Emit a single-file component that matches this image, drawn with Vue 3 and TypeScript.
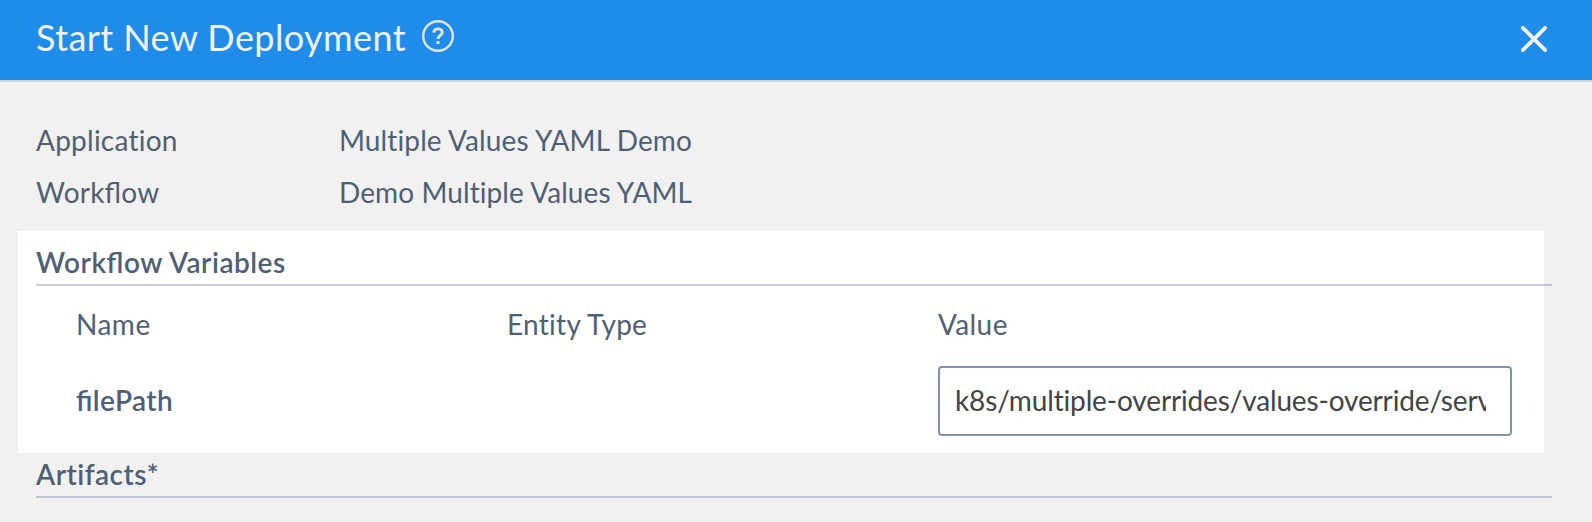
<script setup lang="ts">
import { ref } from 'vue'

interface Detail { label: string; value: string; key: string }

const details: Detail[] = [
  { label: 'Application', value: 'Multiple Values YAML Demo', key: 'application' },
  { label: 'Workflow', value: 'Demo Multiple Values YAML', key: 'workflow' },
]
const filePath = ref('k8s/multiple-overrides/values-override/service.yaml')
</script>

<template>
  <main class="modal">
    <header class="header">
      <h1 class="title">Start New Deployment</h1>
      <svg class="help" viewBox="0 0 32 32" fill="none" stroke="#e2e4e6">
        <circle cx="16" cy="16" r="14.8" stroke-width="2.4" />
        <path d="M11.7 12.6C11.9 10 13.6 8.9 16 8.9c2.6 0 4.2 1.4 4.2 3.5 0 3.1-4.2 3.1-4.2 6.7" stroke-width="2.9" />
        <path d="M16 21v3" stroke-width="3" />
      </svg>
      <button class="close" aria-label="Close">
        <svg viewBox="0 0 26 26" fill="none" stroke="#f1f1f1" stroke-width="3.8" stroke-linecap="round">
          <path d="M1.8 1.8l22.4 22.4M24.2 1.8L1.8 24.2" />
        </svg>
      </button>
    </header>

    <section class="details">
      <div v-for="d in details" :key="d.key" class="detail">
        <span :class="d.key">{{ d.label }}</span>
        <span :class="d.key + '-value'">{{ d.value }}</span>
      </div>
    </section>

    <section class="variables">
      <h2 class="heading variables-title">Workflow Variables</h2>
      <div class="grid names">
        <span class="name">Name</span>
        <span class="entity">Entity Type</span>
        <span class="value">Value</span>
      </div>
      <div class="grid row">
        <b class="file-path">filePath</b>
        <span></span>
        <input v-model="filePath" class="field" type="text" spellcheck="false" />
      </div>
    </section>

    <section class="artifacts">
      <h2 class="heading artifacts-title">Artifacts*</h2>
    </section>
  </main>
</template>

<style>
body { background: #f1f1f1; }
</style>

<style scoped>
.modal {
  box-sizing: border-box;
  width: 1592px;
  height: 522px;
  overflow: hidden;
  background: #f1f1f1;
  color: #4f6074;
  font-family: Lato, 'Open Sans', sans-serif;
  font-size: 28px;
  line-height: 34px;
  font-variant-ligatures: none;
}
.header {
  box-sizing: border-box;
  display: flex;
  align-items: flex-start;
  height: 82px;
  padding: 0 45px 0 36px;
  background: #208cea;
  border-bottom: 2px solid #d2d4d7;
}
.title {
  width: 386px;
  margin: 15px 0 0;
  color: #eef2f6;
  font-size: 36px;
  line-height: 44px;
  font-weight: 400;
  white-space: nowrap;
  letter-spacing: 0.41px;
}
.help { width: 32px; height: 32px; margin-top: 20px; }
.close {
  display: block;
  width: 26px;
  height: 26px;
  margin: 26px 0 0 auto;
  padding: 0;
  border: 0;
  background: none;
}
.close svg { display: block; width: 26px; height: 26px; }
.details { height: 149px; box-sizing: border-box; padding: 41px 36px 0; }
.detail { display: grid; grid-template-columns: 303px 1fr; height: 52px; white-space: nowrap; }
.application { letter-spacing: 0.25px; }
.application-value { letter-spacing: 0.12px; }
.workflow { letter-spacing: 0.22px; font-feature-settings: 'liga' 1; }
.workflow-value { letter-spacing: 0.09px; }
.variables {
  box-sizing: border-box;
  width: 1526px;
  height: 222px;
  margin-left: 18px;
  padding-left: 18px;
  background: #fff;
}
.heading {
  box-sizing: border-box;
  width: 1516px;
  height: 55px;
  margin: 0;
  padding-top: 14px;
  border-bottom: 2px solid rgba(79, 101, 138, 0.3);
  font-size: 28px;
  line-height: 34px;
  font-weight: 600;
}
.variables-title { letter-spacing: 0.52px; font-feature-settings: 'liga' 1; }
.grid { display: grid; grid-template-columns: 431px 431px 574px; padding-left: 40px; }
.names { height: 80px; padding-top: 21px; box-sizing: border-box; }
.name { letter-spacing: 0.5px; }
.entity { letter-spacing: 0.28px; }
.value { letter-spacing: 0.4px; }
.row { height: 70px; align-items: center; }
.file-path {
  padding-bottom: 2px;
  font-weight: 600;
  letter-spacing: 0.42px;
  font-feature-settings: 'liga' 1;
}
.field {
  box-sizing: border-box;
  width: 574px;
  height: 70px;
  padding: 0 24px 2px 15px;
  border: 2px solid #8692aa;
  border-radius: 4px;
  outline: 0;
  background: #fff;
  color: #444;
  font: inherit;
  font-variant-ligatures: none;
  letter-spacing: -0.15px;
}
.artifacts { padding-left: 36px; }
.artifacts-title { height: 45px; padding-top: 4px; letter-spacing: 0.5px; }
</style>
